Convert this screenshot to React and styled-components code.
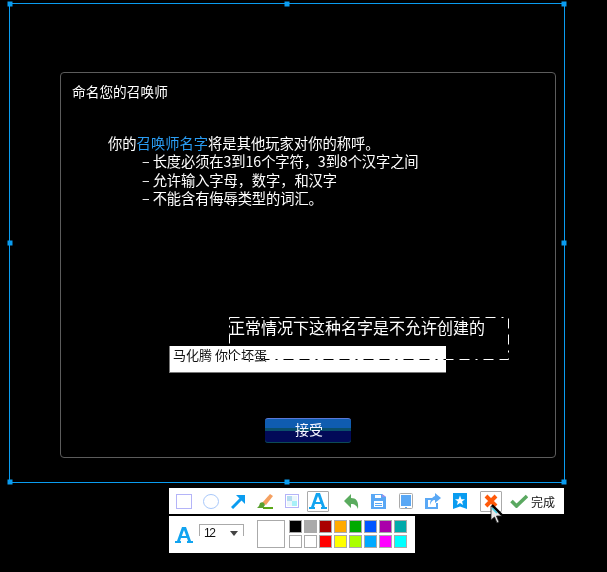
import React from "react";
import styled, { createGlobalStyle } from "styled-components";

const Global = createGlobalStyle`
  html, body { margin: 0; padding: 0; background: #000; }
  body { font-family: "Noto Sans CJK SC", "Liberation Sans", sans-serif; }
`;

const Stage = styled.div`
  position: relative;
  width: 607px;
  height: 572px;
  overflow: hidden;
  background: #000;
  padding: 3px 0 0 9px;
  box-sizing: border-box;
  display: flex;
  flex-direction: column;
  align-items: flex-start;
`;

const Selection = styled.div`
  position: relative;
  box-sizing: border-box;
  width: 556px;
  height: 480px;
  border: 1px solid #0a9cf0;
  padding: 68px 0 0 50px;
`;

const Handle = styled.span`
  position: absolute;
  width: 5px;
  height: 5px;
  background: #0a9cf0;
  left: ${(p) => p.$x}%;
  top: ${(p) => p.$y}%;
  transform: translate(-50%, -50%);
`;

const Panel = styled.section`
  box-sizing: border-box;
  width: 496px;
  height: 386px;
  border: 1px solid #5c5c5c;
  border-radius: 4px;
  padding: 8px 11px 0;
  color: #fff;
  display: flex;
  flex-direction: column;
`;

const Title = styled.h1`
  margin: 0;
  font-size: 13.7px;
  line-height: 20px;
  font-weight: 400;
`;

const Intro = styled.div`
  margin: 33px 0 0 36px;
  font-size: 14.3px;
  line-height: 18.4px;
`;

const Accent = styled.span`
  color: #2a9df4;
`;

const Rule = styled.div`
  margin-left: 34px;
  letter-spacing: -0.12px;
`;

const InputBox = styled.div`
  box-sizing: border-box;
  width: 277px;
  height: 27px;
  margin: 138px 0 0 97px;
  padding: 0 3px;
  background: #fff;
  border: 1px solid #777;
  border-width: 0 0 1px 1px;
  color: #111;
  font-size: 13px;
  line-height: 17px;
`;

const AcceptRow = styled.div`
  display: flex;
  justify-content: center;
  margin: 45px 0 0 0;
`;

const AcceptButton = styled.button`
  box-sizing: border-box;
  width: 86px;
  height: 25px;
  padding: 0 0 3px 2px;
  border: 0;
  border-top: 1px solid #5a78d8;
  border-radius: 3px;
  background: linear-gradient(#0f5cb0 0, #0f5cb0 36%, #0a4f6b 36%, #0a4f6b 48%, #020a58 48%, #020a58 100%);
  color: #f4f6ff;
  font-family: inherit;
  font-size: 14px;
  line-height: 20px;
  box-shadow: inset 0 -1px 0 #0c4a55;
`;

const Note = styled.svg`
  position: absolute;
  left: 219px;
  top: 313px;
  mix-blend-mode: difference;
`;

const NoteText = styled.div`
  position: absolute;
  left: 219px;
  top: 312px;
  color: #fff;
  font-size: 16px;
  line-height: 22px;
  white-space: nowrap;
`;

const Bars = styled.div`
  margin: 5px 0 0 160px;
  display: flex;
  flex-direction: column;
  align-items: flex-start;
  gap: 2px;
`;

const ToolBar = styled.div`
  box-sizing: border-box;
  width: 395px;
  height: 26px;
  background: #fff;
  display: flex;
  align-items: center;
  padding-left: 4px;
`;

const Tool = styled.div`
  box-sizing: border-box;
  width: 22px;
  height: 21px;
  margin-right: ${(p) => p.$gap ?? 5}px;
  display: flex;
  align-items: center;
  justify-content: center;
  border: 1px solid ${(p) => (p.$active ? "#aaa" : "transparent")};
  border-radius: 1px;
`;

const Done = styled.div`
  display: flex;
  align-items: center;
  gap: 3px;
  font-size: 12px;
  color: #111;
`;

const StyleBar = styled.div`
  box-sizing: border-box;
  width: 246px;
  height: 37px;
  background: #fff;
  display: flex;
  align-items: flex-start;
  padding: 4px 0 0 6px;
`;

const BigA = styled.div`
  margin-top: 6px;
  line-height: 0;
`;

const SizeSelect = styled.div`
  box-sizing: border-box;
  width: 45px;
  height: 12px;
  margin: 4px 0 0 6px;
  padding: 2px 5px 0 4px;
  border: 1px solid #aaa;
  border-bottom: 0;
  display: flex;
  align-items: flex-start;
  justify-content: space-between;
  font-size: 12px;
  line-height: 13px;
  letter-spacing: -1.500px;
  color: #111;
  font-family: "Liberation Sans", sans-serif;
`;

const Caret = styled.span`
  width: 0;
  height: 0;
  margin-top: 4px;
  border: 4.500px solid transparent;
  border-top: 5px solid #444;
  border-bottom: 0;
`;

const Current = styled.div`
  box-sizing: border-box;
  width: 28px;
  height: 28px;
  margin-left: 13px;
  background: #fff;
  border: 1px solid #aaa;
`;

const Palette = styled.div`
  margin-left: 4px;
  display: grid;
  grid-template-columns: repeat(8, 13px);
  grid-auto-rows: 13px;
  gap: 2px;
`;

const Swatch = styled.span`
  box-sizing: border-box;
  background: ${(p) => p.$c};
  border: 1px solid #aaa;
`;

const Cursor = styled.svg`
  position: absolute;
  left: 488px;
  top: 503px;
`;

const Rect = () => (
  <svg width="16" height="15"><rect x=".5" y=".5" width="15" height="14" fill="#fff" stroke="#b4b4f8" /></svg>
);
const Ellipse = () => (
  <svg width="16" height="15"><ellipse cx="8" cy="7.500" rx="7.500" ry="7" fill="#fff" stroke="#a8c8fa" /></svg>
);
const Arrow = () => (
  <svg width="14" height="15" viewBox="0 0 14 15"><path d="M1 14 10 5" stroke="#0a9cf0" strokeWidth="3" fill="none" /><path d="M5 1h9v9z" fill="#0a9cf0" /></svg>
);
const Brush = () => (
  <svg width="16" height="15" viewBox="0 0 16 15"><path d="M5 9 13 0l3 2-7 9z" fill="#f5a060" /><path d="M3 9c1.500-1 3-1 4 0l1 2-2 3H0c1.500-1 2.500-3 3-5z" fill="#5aa030" /><path d="M6 13h10v2H6z" fill="#5aa818" /></svg>
);
const Mosaic = () => (
  <svg width="14" height="14" viewBox="0 0 14 14"><rect x=".5" y=".5" width="13" height="13" fill="#fff" stroke="#b4b4f8" /><rect x="2" y="2" width="5" height="5" fill="#b4dcf0" /><rect x="7" y="7" width="5" height="5" fill="#a8f0f8" /><rect x="7" y="2" width="5" height="5" fill="#eaf6fb" /><rect x="2" y="7" width="5" height="5" fill="#eaf6fb" /></svg>
);
const LetterA = ({ size = 18 }) => (
  <svg width={size} height={size} viewBox="0 0 18 18"><path fillRule="evenodd" d="M7 1h4l5 14h2v2h-6v-2h1l-1-3H6l-1 3h1v2H0v-2h2zM9 4 6.800 10h4.400z" fill="#12a4f0" /></svg>
);
const Undo = () => (
  <svg width="15" height="15" viewBox="0 0 15 15"><path d="M7 0v4c5 0 8 3 7 11-1-3-3-5-7-5v4L0 7z" fill="#5aab5e" /></svg>
);
const Save = () => (
  <svg width="15" height="15" viewBox="0 0 15 15"><path fillRule="evenodd" d="M0 0h11l4 3v12H0zM3 7v6h9V7zM4 1v3h6V1z" fill="#5aa8f5" /><path d="M4 9h7v1H4zM4 11h7v1H4z" fill="#5aa8f5" /><path d="M11 0l4 3h-4z" fill="#9a90e8" /></svg>
);
const Tablet = () => (
  <svg width="14" height="16" viewBox="0 0 14 16"><rect x=".5" y=".5" width="13" height="15" rx="1" fill="#fff" stroke="#aaa" /><rect x="2" y="2" width="10" height="11" fill="#5aa8f5" /><rect x="6" y="14" width="2" height="1" fill="#5aa8f5" /></svg>
);
const Share = () => (
  <svg width="16" height="16" viewBox="0 0 16 16"><path d="M0 5h7v2H3v7h8v-4h2v6H0z" fill="#5aa8f5" /><path d="M10 0l6 5-6 5V7C7 7 6 9 5 12 5 7 7 4 10 3z" fill="#5aa8f5" /></svg>
);
const Star = () => (
  <svg width="14" height="16" viewBox="0 0 14 16"><path fillRule="evenodd" d="M0 0h14v16l-7-2.500L0 16zM7 2.500 5.600 6.200H2l2.900 2.300-1 3.500L7 10l3.100 2-1-3.500L12 6.200H8.400z" fill="#0a9cf0" /></svg>
);
const Cross = () => (
  <svg width="14" height="14" viewBox="0 0 14 14"><path d="M2 2l10 10M12 2 2 12" stroke="#ff5a0a" strokeWidth="4" /></svg>
);
const Check = () => (
  <svg width="18" height="14" viewBox="0 0 18 14"><path d="M1.500 7l5 5L17 2" stroke="#5aa860" strokeWidth="3.600" fill="none" /></svg>
);

const colors = [
  "#000000", "#aaaaaa", "#aa0000", "#ffaa00", "#00aa00", "#0055ff", "#aa00aa", "#00aaaa",
  "#ffffff", "#ffffff", "#ff0000", "#ffff00", "#aaff00", "#00aaff", "#ff00ff", "#00ffff",
];

const handles = [
  [0, 0], [50, 0], [100, 0], [0, 50], [100, 50], [0, 100], [50, 100], [100, 100],
];

export default function App() {
  return (
    <Stage>
      <Global />
      <Selection>
        {handles.map(([x, y]) => (
          <Handle key={`${x}-${y}`} $x={x} $y={y} />
        ))}
        <Panel>
          <Title>命名您的召唤师</Title>
          <Intro>
            <div>你的<Accent>召唤师名字</Accent>将是其他玩家对你的称呼。</div>
            <Rule>– 长度必须在3到16个字符，3到8个汉字之间</Rule>
            <Rule>– 允许输入字母，数字，和汉字</Rule>
            <Rule>– 不能含有侮辱类型的词汇。</Rule>
          </Intro>
          <InputBox>马化腾 你个坏蛋</InputBox>
          <AcceptRow>
            <AcceptButton>接受</AcceptButton>
          </AcceptRow>
        </Panel>
        <NoteText>正常情况下这种名字是不允许创建的</NoteText>
        <Note width="282" height="44">
          <rect x=".5" y=".5" width="279" height="42" fill="none" stroke="#fff" strokeDasharray="10 6 10 6 2 6" />
        </Note>
      </Selection>
      <Bars>
        <ToolBar>
          <Tool><Rect /></Tool>
          <Tool><Ellipse /></Tool>
          <Tool><Arrow /></Tool>
          <Tool><Brush /></Tool>
          <Tool $gap={4}><Mosaic /></Tool>
          <Tool $active $gap={11}><LetterA /></Tool>
          <Tool><Undo /></Tool>
          <Tool $gap={6}><Save /></Tool>
          <Tool><Tablet /></Tool>
          <Tool><Share /></Tool>
          <Tool $gap={9}><Star /></Tool>
          <Tool $active $gap={8}><Cross /></Tool>
          <Done><Check />完成</Done>
        </ToolBar>
        <StyleBar>
          <BigA><LetterA /></BigA>
          <SizeSelect>12<Caret /></SizeSelect>
          <Current />
          <Palette>
            {colors.map((c, i) => (
              <Swatch key={i} $c={c} />
            ))}
          </Palette>
        </StyleBar>
      </Bars>
      <Cursor width="16" height="21" viewBox="0 0 16 21">
        <path d="M3 3v14l3.500-3 2.500 6 2-1-2.500-6H14z" fill="#e8e8e8" stroke="#222" strokeWidth=".8" />
        <path d="M4 2 14 12" stroke="#000" strokeWidth="2.400" />
        <path d="M4 5l5 5" stroke="#3fd0e8" strokeWidth="1.500" />
      </Cursor>
    </Stage>
  );
}
